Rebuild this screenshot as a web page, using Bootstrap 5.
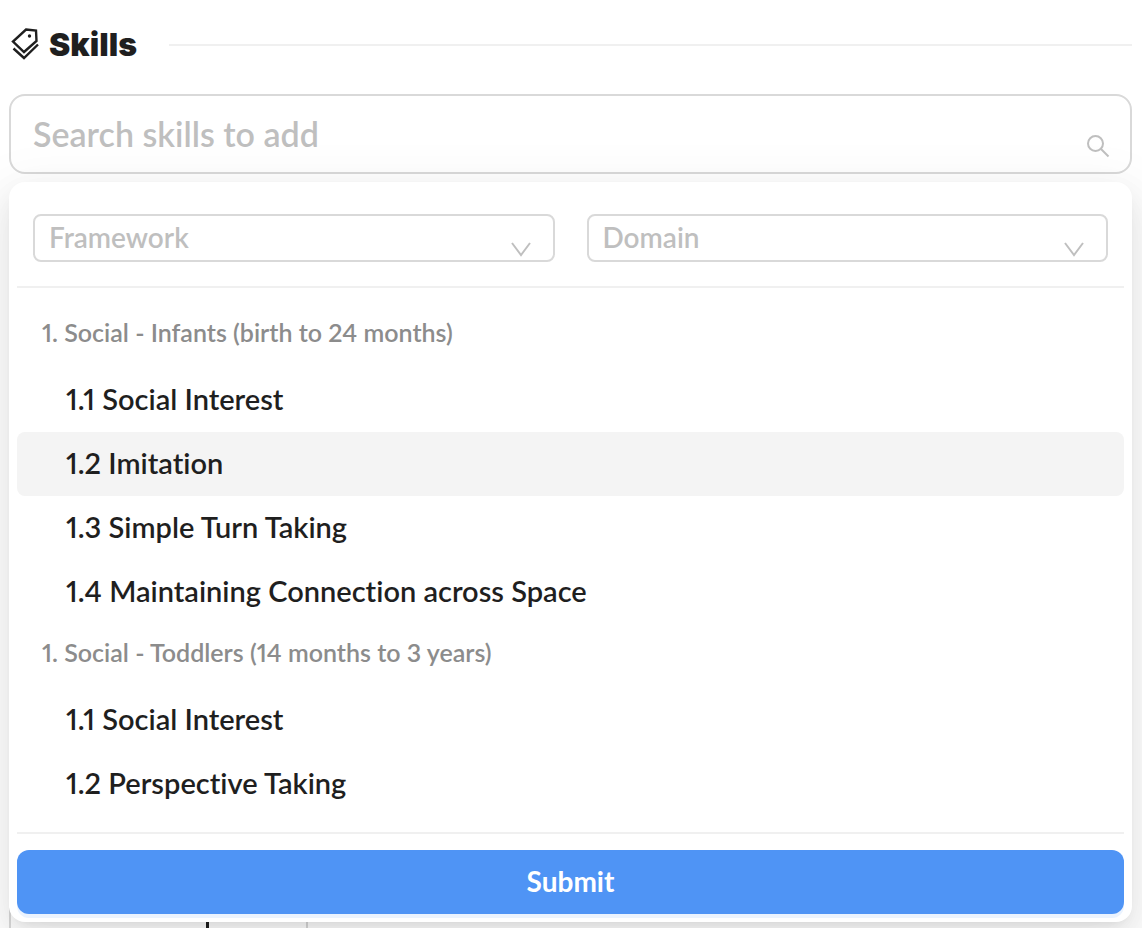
<!DOCTYPE html>
<html lang="en">
<head>
<meta charset="utf-8">
<meta name="viewport" content="width=device-width, initial-scale=1">
<title>Skills</title>
<link href="https://cdn.jsdelivr.net/npm/bootstrap@5.3.0/dist/css/bootstrap.min.css" rel="stylesheet">
<style>
  body { font-family: Lato, "Open Sans", sans-serif; color: #1f1f1f; background: #fff; font-weight: 600; font-size: 28px; line-height: 32px; }
  .page { height: 100vh; overflow: hidden; padding: 24px 10px 0 9px; }
  .section-title { font-family: Inter, sans-serif; font-size: 32px; line-height: 42px; font-weight: 900; }
  .title-rule { height: 2px; background: #f0f0f0; margin-left: 32px; }
  .search-box { margin-top: 28px; }
  .search-box .form-control { height: 80px; border: 2px solid #d9d9d9; border-radius: 16px; padding: 0 72px 2px 22px; font-size: 34px; font-weight: 600; }
  .search-box .form-control::placeholder { color: #bfbfbf; opacity: 1; }
  .search-icon { right: 22px; top: 40px; }
  .skill-menu { z-index: 2; margin-top: 8px; padding: 32px 8px 8px; border-radius: 16px; background: #fff;
    box-shadow: 0 12px 32px rgba(0,0,0,.08), 0 6px 12px -8px rgba(0,0,0,.12), 0 18px 56px 16px rgba(0,0,0,.05); }
  .filters { gap: 32px; padding: 0 16px 24px; border-bottom: 2px solid #f0f0f0; }
  .filters .form-select { height: 48px; border: 2px solid #d9d9d9; border-radius: 8px; padding: 0 48px 2px 14px; font-size: 28px; line-height: 40px; font-weight: 600; color: #bfbfbf; background-image: none; }
  .filter-arrow { right: 22px; top: 27px; }
  .skill-list { padding: 16px 0; border-bottom: 2px solid #f0f0f0; border-radius: 0; }
  .group-label, .skill-option { font-variant-ligatures: none; font-variant-numeric: proportional-nums; }
  .group-label { height: 64px; padding: 12px 25px; font-size: 25px; color: #8c8c8c; }
  .skill-option { height: 64px; padding: 15px 49px 17px; border: 0; background: transparent; color: #1f1f1f; border-radius: 8px !important; font-size: 29px; line-height: 32px; font-weight: 600; }
  .skill-option.current { background: #f4f4f4; }
  .submit-btn { height: 64px; margin-top: 16px; padding: 0 0 2px; border: 0; border-radius: 12px; background: #4f94f5; color: #fff; font-size: 28px; font-weight: 700; box-shadow: 0 4px 0 #ebf3fe; }
  .back-card { width: 299px; height: 40px; margin-top: -14px; padding-left: 195px; border: 2px solid #d9d9d9; border-width: 0 2px; }
  .back-mark { width: 3px; height: 100%; background: #1f1f1f; }
</style>
</head>
<body>
<main class="page">
  <div class="d-flex align-items-center">
    <svg width="32" height="42" viewBox="0 0 32 42" fill="none" stroke="#1f1f1f" stroke-width="2.4" aria-hidden="true">
      <path d="M17 5.5 27 6.500 27.500 17 15 28 4 17.500Z"/>
      <path d="M4.500 24.500 15 34 29 20.500"/>
      <circle cx="20.500" cy="12" r="1.700" fill="#1f1f1f" stroke="none"/>
    </svg>
    <h1 class="section-title mb-0 ms-2">Skills</h1>
    <div class="title-rule flex-grow-1"></div>
  </div>
  <div class="search-box position-relative">
    <input type="text" class="form-control" placeholder="Search skills to add" aria-label="Search skills to add">
    <svg class="search-icon position-absolute" width="24" height="24" viewBox="0 0 24 24" fill="none" stroke="#bfbfbf" stroke-width="2" aria-hidden="true"><circle cx="9.500" cy="9.500" r="7.500"/><path d="m15 15 7.500 7.500"/></svg>
  </div>
  <section class="skill-menu position-relative">
    <div class="filters d-flex">
      <div class="position-relative flex-fill w-50">
        <select class="form-select" aria-label="Framework"><option>Framework</option></select>
        <svg class="filter-arrow position-absolute pe-none" width="24" height="18" viewBox="0 0 24 18" fill="none" stroke="#bfbfbf" stroke-width="2" aria-hidden="true"><path d="m3 2 9 12 9-12"/></svg>
      </div>
      <div class="position-relative flex-fill w-50">
        <select class="form-select" aria-label="Domain"><option>Domain</option></select>
        <svg class="filter-arrow position-absolute pe-none" width="24" height="18" viewBox="0 0 24 18" fill="none" stroke="#bfbfbf" stroke-width="2" aria-hidden="true"><path d="m3 2 9 12 9-12"/></svg>
      </div>
    </div>
    <div class="skill-list list-group">
      <div class="group-label">1. Social - Infants (birth to 24 months)</div>
      <button type="button" class="skill-option list-group-item text-start">1.1 Social Interest</button>
      <button type="button" class="skill-option list-group-item text-start current">1.2 Imitation</button>
      <button type="button" class="skill-option list-group-item text-start">1.3 Simple Turn Taking</button>
      <button type="button" class="skill-option list-group-item text-start">1.4 Maintaining Connection across Space</button>
      <div class="group-label">1. Social - Toddlers (14 months to 3 years)</div>
      <button type="button" class="skill-option list-group-item text-start">1.1 Social Interest</button>
      <button type="button" class="skill-option list-group-item text-start">1.2 Perspective Taking</button>
    </div>
    <button type="submit" class="submit-btn btn w-100 d-block">Submit</button>
  </section>
  <div class="back-card"><div class="back-mark"></div></div>
</main>
<script src="https://cdn.jsdelivr.net/npm/bootstrap@5.3.0/dist/js/bootstrap.bundle.min.js"></script>
</body>
</html>
